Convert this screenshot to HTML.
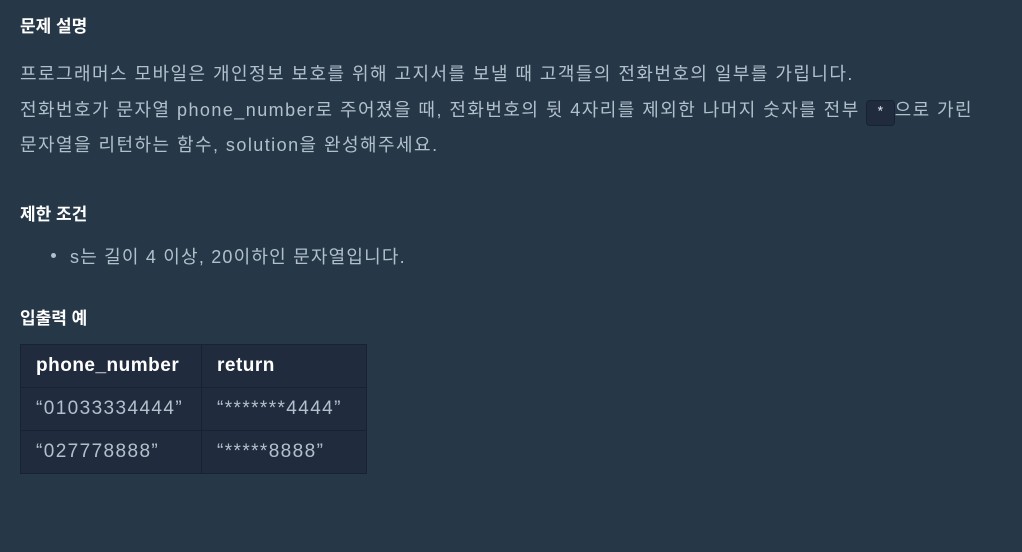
<!DOCTYPE html>
<html><head><meta charset="utf-8"><style>
body{margin:0;background:#263747;width:1022px;height:552px;overflow:hidden;font-family:"Liberation Sans","Noto Sans CJK KR",sans-serif;color:#b2c0cc;}
.t{position:absolute;left:20px;color:#fff;font-weight:bold;font-size:17px;}
.p{position:absolute;left:20px;font-size:18px;letter-spacing:1.45px;line-height:35.6px;top:57px;margin:0;white-space:nowrap;}
code{display:inline-block;background:#202b3d;border:1px solid #172334;border-radius:4px;padding:0 9px;font-size:14px;line-height:24px;color:#e5eaef;font-family:"Liberation Mono",monospace;letter-spacing:0;}
.li{position:absolute;left:70px;top:243px;font-size:18px;letter-spacing:1.2px;}
.dot{position:absolute;left:51px;top:253px;width:5px;height:5px;border-radius:50%;background:#b2c0cc;}
table{position:absolute;left:20px;top:344px;border-collapse:collapse;background:#202b3d;font-size:19px;letter-spacing:1.4px;}
td,th{border:1px solid #172334;height:42px;padding:0 15px;text-align:left;white-space:nowrap;}
th{color:#fff;font-weight:bold;font-size:19px;letter-spacing:0.5px;}
</style></head><body>
<div class="t" style="top:12px">문제 설명</div>
<p class="p">프로그래머스 모바일은 개인정보 보호를 위해 고지서를 보낼 때 고객들의 전화번호의 일부를 가립니다.<br>전화번호가 문자열 phone_number로 주어졌을 때, 전화번호의 뒷 4자리를 제외한 나머지 숫자를 전부 <code>*</code>으로 가린<br>문자열을 리턴하는 함수, solution을 완성해주세요.</p>
<div class="t" style="top:200px">제한 조건</div>
<div class="dot"></div>
<div class="li">s는 길이 4 이상, 20이하인 문자열입니다.</div>
<div class="t" style="top:304px">입출력 예</div>
<table>
<tr><th style="width:150px">phone_number</th><th style="width:134px">return</th></tr>
<tr><td>“01033334444”</td><td>“*******4444”</td></tr>
<tr><td>“027778888”</td><td>“*****8888”</td></tr>
</table>
</body></html>
